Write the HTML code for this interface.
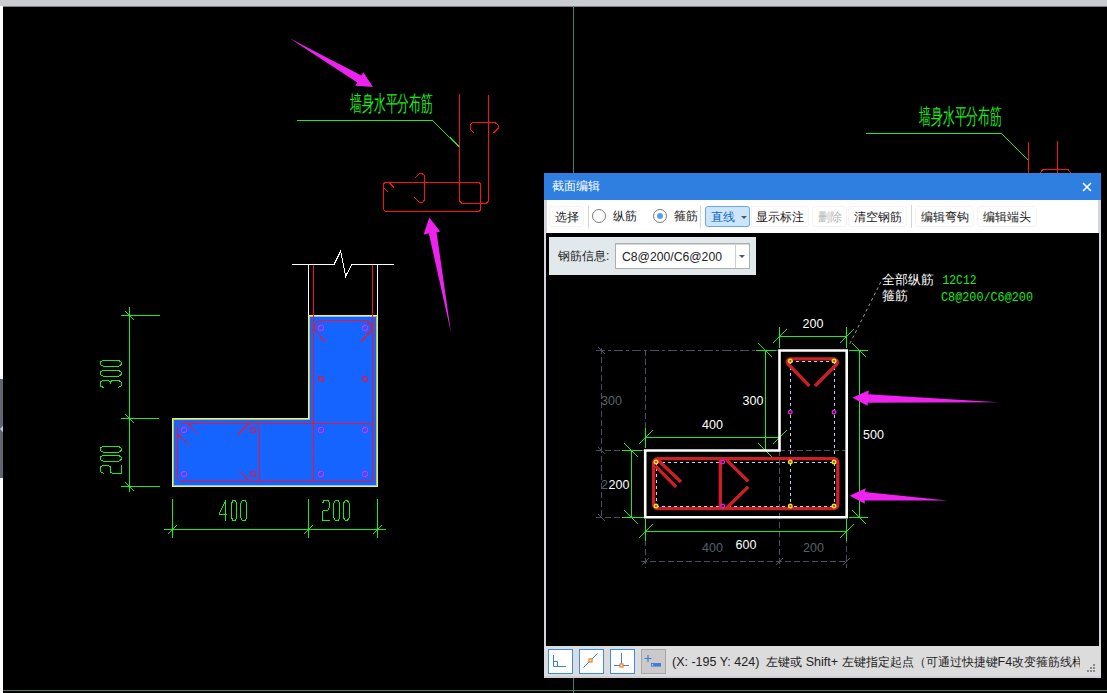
<!DOCTYPE html>
<html><head><meta charset="utf-8">
<style>
html,body{margin:0;padding:0;background:#000;}
body{width:1107px;height:693px;position:relative;overflow:hidden;font-family:"Liberation Sans",sans-serif;}
.abs{position:absolute;}
svg{position:absolute;left:0;top:0;}
.tb{position:absolute;top:206px;height:21px;font-size:12px;line-height:21px;color:#222;box-sizing:border-box;border:1px solid #f4f4f4;border-radius:3px;text-align:center;}
.sep{position:absolute;top:205px;width:1px;height:23px;background:#d6d6d6;}
.ib{position:absolute;top:649px;width:25px;height:25px;box-sizing:border-box;border:1px solid #3b8ee8;background:#fff;}
</style></head><body>
<!-- frame -->
<div class="abs" style="left:0;top:0;width:1107px;height:7px;background:#c9ccd1;"></div>
<div class="abs" style="left:3px;top:6px;width:1104px;height:1px;background:#7c8086;"></div>
<div class="abs" style="left:0;top:6px;width:3px;height:687px;background:#fff;"></div>
<div class="abs" style="left:0;top:379px;width:3px;height:99px;background:#5e6872;"></div>
<svg class="abs" width="3" height="8" style="left:0;top:425px;" viewBox="0 0 3 8"><path d="M0,4 L3,0.8 V7.2 Z" fill="#c4c8cc"/></svg>
<div class="abs" style="left:573px;top:6px;width:1px;height:687px;background:#40806c;"></div>
<div class="abs" style="left:3px;top:690px;width:1104px;height:1px;background:#40806c;"></div>

<!-- main CAD drawing -->
<svg width="1107" height="693" viewBox="0 0 1107 693">
<g fill="none" stroke-width="1" shape-rendering="crispEdges">
<!-- arrows -->
<polygon fill="#ee22ee" stroke="none" shape-rendering="auto" points="289.5,38.3 361.4,75.4 363.3,72.2 373,87 355.2,85.8 357.3,82.6"/>
<polygon fill="#ee22ee" stroke="none" shape-rendering="auto" points="429.2,217.5 440.2,231.5 436.6,232.3 451,332.8 428.8,233.3 423.6,234.8"/>
<!-- top-left label -->
<polyline stroke="#1ee81e" points="297,120.5 432.5,120.5" />
<polyline stroke="#1ee81e" points="432.5,120.5 460,147.5" />
<text x="350" y="110.5" font-size="22" fill="#1ee81e" stroke="none" textLength="83" lengthAdjust="spacingAndGlyphs" style="font-family:'Liberation Sans',sans-serif">墙身水平分布筋</text>
<!-- red rebar top -->
<g stroke="#ff1010">
<path d="M459.5,94 V201 L462,203.5 H486 L488.5,201 V95"/>
<path d="M474.5,133.5 L470,129 V125.5 L472.5,122.5 H495 L498.5,125.5 V128 L493.5,133"/>
<path d="M385,182.5 H479 L480.5,184 V210 L479,211.5 H385.5 L383.5,209.5 V184 Z"/>
<path d="M389.5,183 L394,187.5 M384,188 L388.5,192.5"/>
<path d="M414.5,178.5 L419,174 L420.5,173.5 H422 L424.5,175.5 V200 L422.5,202.5 H419.5 L414.5,197.5"/>
</g>
<!-- break line & wall -->
<polyline stroke="#ffffff" points="292,264.5 334,264.5 340.6,251.3 345.7,276.1 351.7,264.5 394,264.5"/>
<path stroke="#ffffff" d="M308.5,264.5 V316 M377.5,264.5 V316"/>
<!-- L section -->
<polygon fill="#1664ff" stroke="#ffff00" points="308.5,315.5 377.5,315.5 377.5,486.5 172.5,486.5 172.5,418.5 308.5,418.5"/>
<polygon fill="none" stroke="#8fb8ff" points="309.5,316.5 376.5,316.5 376.5,485.5 173.5,485.5 173.5,419.5 309.5,419.5"/>
<g stroke="#ff1020">
<path d="M313.5,264.5 V481.5 M372.5,264.5 V481.5"/>
<path d="M315.5,331 L314.5,330 V325 L318.5,320.5 H367 L371.5,325 V330 L370.5,331"/>
<path d="M177.5,426.5 L180.5,423.5 H369.5 L372.5,426.5 M177.5,478.5 L180.5,481.5 H369.5 L372.5,478.5"/>
<path d="M177.5,426.5 V478.5 M259.5,426.5 V478.5"/>
<path d="M256.5,423.5 L259.5,426.5 M256.5,481.5 L259.5,478.5"/>
<path d="M188,423.5 L198,434 M177.5,434 L189,445 M249,423.5 L238,434.5 M248,479.5 L239,471 M315.5,331.5 L325,341.5 M370.5,332 L361,341.5"/>
<circle cx="253" cy="430" r="2.5"/><circle cx="253" cy="474" r="2.5"/>
<circle cx="321" cy="379" r="2.5"/><circle cx="365" cy="379" r="2.5"/>
</g>
<g stroke="#ee22ee">
<circle cx="184" cy="430" r="2.5"/><circle cx="184" cy="474" r="2.5"/>
<circle cx="321" cy="328" r="2.5"/><circle cx="365" cy="328" r="2.5"/>
<circle cx="321" cy="430" r="2.5"/><circle cx="365" cy="430" r="2.5"/>
<circle cx="321" cy="474" r="2.5"/><circle cx="365" cy="474" r="2.5"/>
</g>
<!-- dims -->
<g stroke="#1ee81e">
<path d="M129.5,307 V492 M121,315.5 H160 M121,418.5 H159 M121,486.5 H160"/>
<path d="M164,529.5 H386 M172.5,499 V538 M308.5,499 V538 M377.5,499 V538"/>
<path d="M125,311 L134,320 M125,414 L134,423 M125,482 L134,491 M168,534 L177,525 M304,534 L313,525 M373,534 L382,525"/>
</g>
<path fill="none" stroke="#1ee81e" stroke-width="1" d="M103.59,387.50 L100.50,386.00 L100.50,382.00 L103.08,380.50 L108.22,380.50 L110.28,382.00 L110.28,384.00 M110.28,382.00 L112.34,380.50 L118.53,380.50 L121.10,382.00 L121.10,386.00 L118.01,387.50 M100.50,374.70 L100.50,372.00 L103.59,370.20 L118.01,370.20 L121.10,372.00 L121.10,374.70 L118.01,376.50 L103.59,376.50 Z M100.50,364.70 L100.50,362.00 L103.59,360.20 L118.01,360.20 L121.10,362.00 L121.10,364.70 L118.01,366.50 L103.59,366.50 Z M103.59,473.50 L100.50,471.70 L100.50,466.90 L103.08,465.10 L107.71,465.10 L110.28,466.90 L110.28,471.70 L112.34,473.50 L121.10,473.50 L121.10,465.10 M100.50,459.70 L100.50,457.00 L103.59,455.20 L118.01,455.20 L121.10,457.00 L121.10,459.70 L118.01,461.50 L103.59,461.50 Z M100.50,450.70 L100.50,448.00 L103.59,446.20 L118.01,446.20 L121.10,448.00 L121.10,450.70 L118.01,452.50 L103.59,452.50 Z M225.80,520.50 L225.80,500.50 L219.50,513.00 L219.50,514.00 L227.38,514.00 M233.00,500.50 L235.25,500.50 L236.75,503.50 L236.75,517.50 L235.25,520.50 L233.00,520.50 L231.50,517.50 L231.50,503.50 Z M242.30,500.50 L245.00,500.50 L246.80,503.50 L246.80,517.50 L245.00,520.50 L242.30,520.50 L240.50,517.50 L240.50,503.50 Z M322.50,503.50 L324.00,500.50 L328.00,500.50 L329.50,503.00 L329.50,507.50 L328.00,510.00 L324.00,510.00 L322.50,512.00 L322.50,520.50 L329.50,520.50 M335.30,500.50 L338.00,500.50 L339.80,503.50 L339.80,517.50 L338.00,520.50 L335.30,520.50 L333.50,517.50 L333.50,503.50 Z M345.10,500.50 L347.50,500.50 L349.10,503.50 L349.10,517.50 L347.50,520.50 L345.10,520.50 L343.50,517.50 L343.50,503.50 Z"/>
<!-- top right label -->
<polyline stroke="#1ee81e" points="866,133.5 1001.5,133.5" />
<polyline stroke="#1ee81e" points="1001.5,133.5 1028.5,160.5" />
<text x="919" y="124.2" font-size="22" fill="#1ee81e" stroke="none" textLength="83" lengthAdjust="spacingAndGlyphs" style="font-family:'Liberation Sans',sans-serif">墙身水平分布筋</text>
<g stroke="#ff1010">
<path d="M1028.5,142 V173 M1057.5,141 V173 M1043,169.5 H1068"/>
<path d="M1043,169.5 L1040,173 M1068,169.5 L1070.5,173"/>
</g>
</g>
</svg>

<!-- dialog -->
<div class="abs" style="left:544px;top:173px;width:557px;height:505px;background:#d2d5dc;"></div>
<div class="abs" style="left:544px;top:173px;width:557px;height:27px;background:#2f7fe0;"></div>
<div class="abs" style="left:552px;top:177px;font-size:12px;line-height:18px;color:#fff;">截面编辑</div>
<svg class="abs" width="12" height="12" style="left:1081px;top:181px;" viewBox="0 0 12 12"><path d="M2,2 L10,10 M10,2 L2,10" stroke="#fff" stroke-width="1.6"/></svg>
<div class="abs" style="left:547px;top:200px;width:551px;height:33px;background:#fff;"></div>
<div class="tb" style="left:549px;width:35px;">选择</div>
<div class="sep" style="left:588px;"></div>
<div class="abs" style="left:592px;top:209px;width:14px;height:14px;box-sizing:border-box;border:1px solid #7a7a7a;border-radius:50%;background:#fff;"></div>
<div class="abs" style="left:613px;top:206px;font-size:12px;line-height:21px;color:#222;">纵筋</div>
<div class="abs" style="left:653px;top:209px;width:14px;height:14px;box-sizing:border-box;border:1px solid #7a7a7a;border-radius:50%;background:#fff;"></div>
<div class="abs" style="left:657px;top:213px;width:6px;height:6px;border-radius:50%;background:#54a0f2;"></div>
<div class="abs" style="left:674px;top:206px;font-size:12px;line-height:21px;color:#222;">箍筋</div>
<div class="sep" style="left:700px;"></div>
<div class="tb" style="left:705px;width:45px;background:#cde5f8;border-color:#6aa8e8;text-align:left;padding-left:5px;color:#1366c8;">直线</div>
<svg class="abs" width="8" height="5" style="left:740px;top:215px;" viewBox="0 0 8 5"><path d="M1,1 H7 L4,4 Z" fill="#555"/></svg>
<div class="tb" style="left:751px;width:58px;">显示标注</div>
<div class="tb" style="left:812px;width:35px;color:#b4b4b4;">删除</div>
<div class="tb" style="left:848px;width:59px;">清空钢筋</div>
<div class="sep" style="left:911px;"></div>
<div class="tb" style="left:915px;width:59px;">编辑弯钩</div>
<div class="tb" style="left:977px;width:60px;">编辑端头</div>
<div class="abs" style="left:546px;top:233px;width:553px;height:413px;background:#000;"></div>
<!-- info panel -->
<div class="abs" style="left:549px;top:237px;width:207px;height:38px;background:#e2e9ec;"></div>
<div class="abs" style="left:558px;top:247px;font-size:12px;line-height:19px;color:#222;">钢筋信息:</div>
<div class="abs" style="left:615px;top:243px;width:135px;height:26px;box-sizing:border-box;border:1px solid #adadad;background:#fff;"></div>
<div class="abs" style="left:616px;top:244px;width:133px;height:1px;background:#d8d8d8;"></div>
<div class="abs" style="left:735px;top:244px;width:1px;height:24px;background:#d0d0d0;"></div>
<svg class="abs" width="8" height="5" style="left:738px;top:254px;" viewBox="0 0 8 5"><path d="M1,1 H7 L4,4 Z" fill="#555"/></svg>
<div class="abs" style="left:622px;top:248px;font-size:12.2px;line-height:19px;color:#222;">C8@200/C6@200</div>
<!-- dialog drawing -->
<svg width="1107" height="693" viewBox="0 0 1107 693" style="font-family:'Liberation Sans',sans-serif">
<g fill="none" stroke="#46505f" stroke-width="1" shape-rendering="crispEdges">
<path stroke-dasharray="9,3,3,3" d="M596,350.5 H779"/>
<path stroke-dasharray="6,3" d="M596,450.5 H645 M779,450.5 H847 M596,517.5 H645 M641,561.5 H848"/>
<path stroke-dasharray="6,3" d="M601.5,348 V519 M645.5,350 V428 M645.5,540 V568 M779.5,450 V568 M846.5,519 V568"/>
<path shape-rendering="auto" d="M598,347 L605,354 M598,447 L605,454 M598,514 L605,521 M642,565 L649,558 M776,565 L783,558 M843,565 L850,558"/>
</g>
<g fill="#56606c" font-size="12.5" style="font-family:'Liberation Sans',sans-serif">
<text x="601" y="405">300</text>
<text x="601" y="489">2</text>
<text x="702" y="552">400</text>
<text x="803" y="552">200</text>
</g>
<g fill="none" stroke="#1ee81e" stroke-width="1" shape-rendering="crispEdges">
<path d="M779.5,336.5 H846.5 M779.5,327 V348 M846.5,327 V348"/>
<path d="M765.5,350.5 V450.5 M756,350.5 H776 M756,450.5 H776"/>
<path d="M859.5,350.5 V517.5 M849,350.5 H868 M849,517.5 H868"/>
<path d="M645.5,437.5 H779.5 M645.5,428 V448 M779.5,428 V449"/>
<path d="M631.5,450.5 V517.5 M622,450.5 H642 M622,517.5 H644"/>
<path d="M645.5,531.5 H846.5 M645.5,519 V541 M846.5,519 V541"/>
<path d="M772.5,343.5 L786.5,329.5 M839.5,343.5 L853.5,329.5 M758.5,343.5 L772.5,357.5 M758.5,443.5 L772.5,457.5 M852.5,343.5 L866.5,357.5 M852.5,510.5 L866.5,524.5 M638.5,444.5 L652.5,430.5 M772.5,444.5 L786.5,430.5 M624.5,443.5 L638.5,457.5 M624.5,510.5 L638.5,524.5 M638.5,538.5 L652.5,524.5 M839.5,538.5 L853.5,524.5"/>
</g>
<path d="M779.5,350.5 H846.7 V517.2 H645.2 V450.5 H779.5 Z" fill="none" stroke="#ffffff" stroke-width="2.6"/>
<g fill="none" stroke="#b4d4f4" stroke-width="1" stroke-dasharray="3,3" shape-rendering="crispEdges">
<path d="M656,462.5 H834 M656,506.5 H834 M656.5,462 V506 M790.5,361 V506 M834.5,361 V506 M790,361.5 H834"/>
</g>
<g fill="none" stroke="#d01e26" stroke-width="3.3" stroke-linecap="butt">
<rect x="653.6" y="458.7" width="184.2" height="49.9" rx="4"/>
<path d="M720.3,458.7 V508.6 M726.5,459.8 L748.2,481.4 M748.2,486.9 L726.5,508 M658.2,460.3 L681,482 M655.5,466 L676.1,486.9"/>
<path d="M809.4,386 L788.5,364.5 Q785.5,360 790,358.8 H834 Q839,360 836.5,364.5 L815,386"/>
</g>
<g fill="#7a6010" stroke="#f8d838" stroke-width="1.4">
<circle cx="790.3" cy="361" r="1.8"/><circle cx="834" cy="361" r="1.8"/>
<circle cx="656" cy="462" r="1.8"/><circle cx="656" cy="506" r="1.8"/>
<circle cx="790.3" cy="462" r="1.8"/><circle cx="790.3" cy="506" r="1.8"/>
<circle cx="834" cy="462" r="1.8"/><circle cx="834" cy="506" r="1.8"/>
</g>
<g fill="#000" stroke="#e820e8" stroke-width="1.3">
<circle cx="790.3" cy="412.2" r="1.8"/><circle cx="834" cy="412.2" r="1.8"/>
<circle cx="722.7" cy="462" r="1.8"/><circle cx="722.7" cy="506" r="1.8"/>
</g>
<g fill="#ffffff" font-size="12.5">
<text x="802.5" y="327.5">200</text>
<text x="742.5" y="404.5">300</text>
<text x="702" y="429">400</text>
<text x="863" y="438.5">500</text>
<text x="608.5" y="489">200</text>
<text x="735.5" y="549">600</text>
<text x="881.5" y="283.5" font-size="12.7">全部纵筋</text>
<text x="881.5" y="300" font-size="12.7">箍筋</text>
</g>
<path d="M880.8,282 L849.3,344.6" stroke="#9a9a9a" stroke-width="1" stroke-dasharray="3,3" fill="none"/>
<g fill="#1ee81e" style="font-family:'Liberation Mono',monospace">
<text x="942.5" y="284.3" font-size="13" textLength="34" lengthAdjust="spacingAndGlyphs">12C12</text>
<text x="941" y="300.8" font-size="13" textLength="92" lengthAdjust="spacingAndGlyphs">C8@200/C6@200</text>
</g>
<polygon fill="#ee22ee" points="852.5,397.8 868.8,390.3 868.3,394.2 998.8,402.3 867.8,402.8 867.5,405.7"/>
<polygon fill="#ee22ee" points="849.7,495.7 865.6,488.2 865,492 947.2,500.4 864.8,500.5 864.7,503.8"/>
</svg>
<!-- status bar -->
<div class="abs" style="left:544px;top:646px;width:557px;height:32px;background:#dcdcdc;"></div>
<div class="abs" style="left:544px;top:676px;width:557px;height:2px;background:#cdd0d8;"></div>
<div class="ib" style="left:548px;"><svg width="23" height="23" viewBox="0 0 23 23"><path d="M4.5,5 V16.5 H17 M4.5,11.5 H8.5 V16.5" fill="none" stroke="#3f7fd6" stroke-width="1"/></svg></div>
<div class="ib" style="left:579px;"><svg width="23" height="23" viewBox="0 0 23 23"><path d="M3.5,17.5 L17.5,3.5" fill="none" stroke="#3f7fd6" stroke-width="1"/><rect x="9" y="9" width="3" height="3" fill="#fff" stroke="#f07818" stroke-width="1.2"/></svg></div>
<div class="ib" style="left:610px;"><svg width="23" height="23" viewBox="0 0 23 23"><path d="M10.5,3 V15.5 M3,15.5 H18" fill="none" stroke="#3f7fd6" stroke-width="1"/><rect x="9" y="14" width="3" height="3" fill="#fff" stroke="#f07818" stroke-width="1.2"/></svg></div>
<div class="ib" style="left:641px;background:#cacaca;border-color:#a6a6a6;"><svg width="23" height="23" viewBox="0 0 23 23"><path d="M6,5 V12 M2.5,8.5 H9.5" fill="none" stroke="#3f7fd6" stroke-width="1.2"/><rect x="9" y="13" width="10" height="3.6" fill="#3f7fd6"/><rect x="10" y="14" width="1" height="1.6" fill="#cfe0f8"/></svg></div>
<div class="abs" style="left:672px;top:653px;width:408px;overflow:hidden;white-space:nowrap;font-size:12.5px;line-height:18px;color:#222;">(X: -195 Y: 424)&nbsp; <span style="font-size:12px">左键或</span> Shift+ <span style="font-size:12px">左键指定起点（可通过快捷键</span>F4<span style="font-size:12px">改变箍筋线样式）</span></div>
<svg class="abs" width="10" height="10" style="left:1086px;top:663px;" viewBox="0 0 10 10"><g fill="#8a8a8a"><rect x="7" y="1" width="2" height="2"/><rect x="4" y="4" width="2" height="2"/><rect x="7" y="4" width="2" height="2"/><rect x="1" y="7" width="2" height="2"/><rect x="4" y="7" width="2" height="2"/><rect x="7" y="7" width="2" height="2"/></g></svg>
</body></html>
